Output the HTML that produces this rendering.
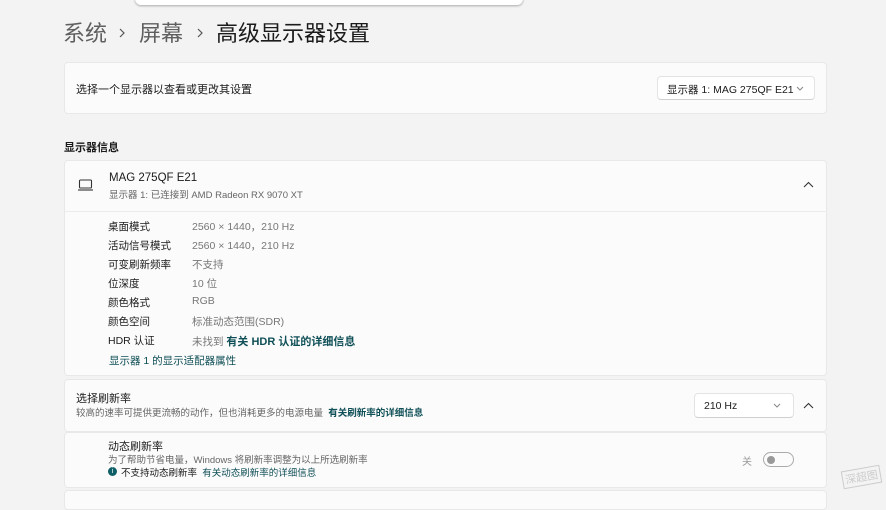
<!DOCTYPE html>
<html><head><meta charset="utf-8"><style>
*{margin:0;padding:0;box-sizing:border-box}
body{width:886px;height:500px;overflow:hidden;background:#f3f3f3;font-family:"Liberation Sans","Noto Sans CJK SC",sans-serif;color:#1b1b1b;position:relative}
.a{position:absolute;white-space:nowrap}
.card{position:absolute;left:64px;width:763px;background:#fbfbfb;border:1px solid #e8e8e8;border-radius:4px}
.lab{font-size:10.5px;color:#1b1b1b}
.val{font-size:10.5px;color:#777}
.link{color:#0f4f57;font-weight:bold}
.dd{position:absolute;background:#fff;border:1px solid #e3e3e3;border-bottom-color:#d0d0d0;border-radius:4px;font-size:10.5px;color:#1b1b1b}
</style></head><body>
<div class="a" style="left:135px;top:-10px;width:388px;height:15px;background:#fff;border-radius:6px;box-shadow:0 1px 2px rgba(0,0,0,.3)"></div>
<div class="a" style="left:63px;top:16px;font-size:22px;color:#5f5f5f">系统</div>
<svg class="a" style="left:119px;top:28px" width="6" height="10" viewBox="0 0 6 10"><path d="M1 1L5 5L1 9" fill="none" stroke="#555" stroke-width="1.2"/></svg>
<div class="a" style="left:139px;top:16px;font-size:22px;color:#5f5f5f">屏幕</div>
<svg class="a" style="left:197px;top:28px" width="6" height="10" viewBox="0 0 6 10"><path d="M1 1L5 5L1 9" fill="none" stroke="#555" stroke-width="1.2"/></svg>
<div class="a" style="left:216px;top:16px;font-size:22px;color:#1b1b1b">高级显示器设置</div>

<div class="card" style="top:62px;height:52px"></div>
<div class="a" style="left:76px;top:81px;font-size:11px">选择一个显示器以查看或更改其设置</div>
<div class="dd" style="left:657px;top:76px;width:158px;height:24px;padding:5px 0 0 9px">显示器 1: MAG 275QF E21</div>
<svg class="a" style="left:796px;top:86px" width="8" height="5" viewBox="0 0 8 5"><path d="M1 1L4 4L7 1" fill="none" stroke="#888" stroke-width="1"/></svg>

<div class="a" style="left:64px;top:139px;font-size:11px;font-weight:bold">显示器信息</div>

<div class="card" style="top:160px;height:216px"></div>
<div class="a" style="left:64px;top:211px;width:763px;height:1px;background:#ececec"></div>
<svg class="a" style="left:78px;top:179px" width="16" height="12" viewBox="0 0 16 12"><rect x="1.5" y="1" width="12" height="8" rx="1" fill="none" stroke="#333" stroke-width="1.1"/><line x1="0" y1="11" x2="15" y2="11" stroke="#333" stroke-width="1.1"/></svg>
<div class="a" style="left:109px;top:172px;font-size:11.5px">MAG 275QF E21</div>
<div class="a" style="left:109px;top:187px;font-size:9.5px;color:#666">显示器 1: 已连接到 AMD Radeon RX 9070 XT</div>
<svg class="a" style="left:803px;top:181px" width="11" height="7" viewBox="0 0 11 7"><path d="M1 6L5.5 1.5L10 6" fill="none" stroke="#333" stroke-width="1.1"/></svg>

<div class="a lab" style="left:108px;top:219px">桌面模式</div><div class="a val" style="left:192px;top:219px">2560 × 1440，210 Hz</div>
<div class="a lab" style="left:108px;top:238px">活动信号模式</div><div class="a val" style="left:192px;top:238px">2560 × 1440，210 Hz</div>
<div class="a lab" style="left:108px;top:257px">可变刷新频率</div><div class="a val" style="left:192px;top:257px">不支持</div>
<div class="a lab" style="left:108px;top:276px">位深度</div><div class="a val" style="left:192px;top:276px">10 位</div>
<div class="a lab" style="left:108px;top:295px">颜色格式</div><div class="a val" style="left:192px;top:295px">RGB</div>
<div class="a lab" style="left:108px;top:314px">颜色空间</div><div class="a val" style="left:192px;top:314px">标准动态范围(SDR)</div>
<div class="a lab" style="left:108px;top:333px">HDR 认证</div><div class="a val" style="left:192px;top:333px">未找到 <span class="link" style="font-size:11px">有关 HDR 认证的详细信息</span></div>
<div class="a" style="left:109px;top:353px;font-size:10.5px;color:#0f4f57">显示器 1 的显示适配器属性</div>

<div class="card" style="top:379px;height:53px"></div>
<div class="a" style="left:76px;top:390px;font-size:11px">选择刷新率</div>
<div class="a" style="left:76px;top:405px;font-size:9.5px;color:#666">较高的速率可提供更流畅的动作，但也消耗更多的电源电量 &nbsp;<span class="link">有关刷新率的详细信息</span></div>
<div class="dd" style="left:694px;top:393px;width:100px;height:25px;padding:6px 0 0 9px">210 Hz</div>
<svg class="a" style="left:773px;top:403px" width="8" height="5" viewBox="0 0 8 5"><path d="M1 1L4 4L7 1" fill="none" stroke="#888" stroke-width="1"/></svg>
<svg class="a" style="left:803px;top:402px" width="11" height="7" viewBox="0 0 11 7"><path d="M1 6L5.5 1.5L10 6" fill="none" stroke="#333" stroke-width="1.1"/></svg>

<div class="card" style="top:432px;height:56px"></div>
<div class="a" style="left:108px;top:438px;font-size:11px">动态刷新率</div>
<div class="a" style="left:108px;top:452px;font-size:9.5px;color:#666">为了帮助节省电量，Windows 将刷新率调整为以上所选刷新率</div>
<div class="a" style="left:108px;top:467px;width:9px;height:9px;border-radius:50%;background:#0f5f66;color:#fff;font-size:7px;text-align:center;line-height:9px">i</div>
<div class="a" style="left:121px;top:465px;font-size:9.5px">不支持动态刷新率 &nbsp;<span style="color:#0f4f57">有关动态刷新率的详细信息</span></div>
<div class="a" style="left:742px;top:453px;font-size:10px;color:#999">关</div>
<div class="a" style="left:763px;top:452px;width:31px;height:15px;border:1px solid #aaa;border-radius:8px"><div style="position:absolute;left:3px;top:2.5px;width:8px;height:8px;border-radius:50%;background:#999"></div></div>

<div class="card" style="top:490px;height:20px"></div>
<div class="a" style="left:842px;top:468px;font-size:11px;color:#ccc;transform:rotate(-10deg);border:1px solid #ccc;padding:0 2px">深超图</div>
</body></html>
